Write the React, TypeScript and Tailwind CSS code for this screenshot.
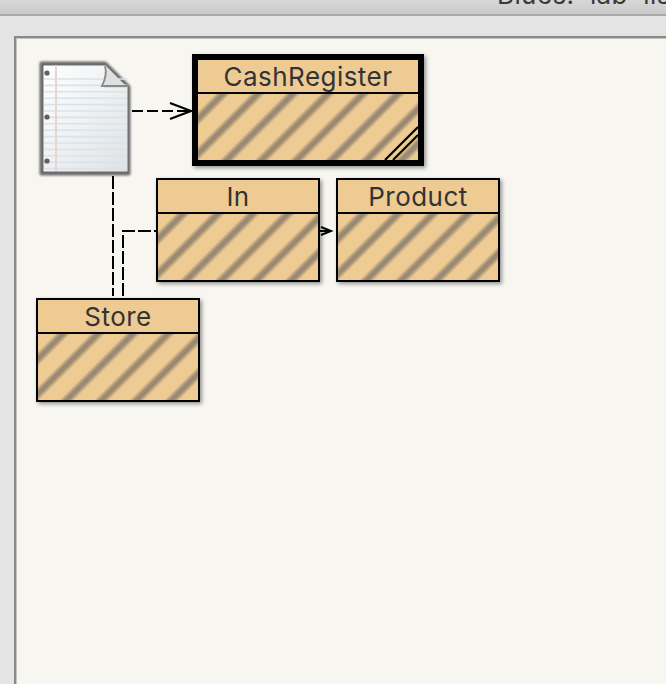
const FONT = "font-['Inter',sans-serif]";

// nodes sit on the diagram canvas, coordinates are relative to the panel's inner corner
function ClassBox({ name, x, y, selected }: { name: string; x: number; y: number; selected?: boolean }) {
  return (
    <div
      className={`absolute flex flex-col bg-[#eecb93] border-black shadow-[2px_2px_4px_rgba(0,0,0,0.4)] ${
        selected ? "w-[232px] h-[112px] border-[6px]" : "w-[164px] h-[104px] border-2"
      }`}
      style={{ left: x, top: y }}
    >
      <div className={`flex items-center justify-center h-[34px] pt-[1px] shrink-0 border-b-2 border-black text-[26px] tracking-[0.45px] leading-none text-[#333333] ${FONT}`}>
        {name}
      </div>
      <div className="relative flex-1 bg-[repeating-linear-gradient(135deg,#eecb93_0px,#eecb93_12px,#9b8a73_16px,#9b8a73_19px,#eecb93_23px,#eecb93_24.75px)]">
        {selected && (
          <svg className="absolute right-0 bottom-0" width="36" height="36" viewBox="0 0 36 36">
            <path d="M3 36L36 3M11 36L36 11" stroke="#000" strokeWidth="2.2" fill="none" />
          </svg>
        )}
      </div>
    </div>
  );
}

function DocIcon() {
  const lines = [];
  for (let y = 21; y < 114; y += 6.4) lines.push(y);
  return (
    <svg className="absolute left-[20px] top-[20px]" width="100" height="124" viewBox="0 0 100 124">
      <defs>
        <linearGradient id="sheet" x1="0" y1="0" x2="1" y2="1">
          <stop offset="0" stopColor="#ffffff" />
          <stop offset="1" stopColor="#dfe2e4" />
        </linearGradient>
        <filter id="soft" x="-10%" y="-10%" width="120%" height="120%">
          <feGaussianBlur stdDeviation="0.7" />
        </filter>
        <filter id="blur2" x="-10%" y="-10%" width="120%" height="120%">
          <feGaussianBlur stdDeviation="0.9" />
        </filter>
      </defs>
      <path d="M5.5 5.5H69L92.5 29V115.5H5.5Z" fill="#6c6c6c" stroke="#6c6c6c" strokeWidth="4" strokeLinejoin="round" filter="url(#blur2)" />
      <path d="M7.5 7.5H69L91.5 30V113.5H7.5Z" fill="url(#sheet)" filter="url(#soft)" />
      <g filter="url(#soft)">
        {lines.map((y) => (
          <path key={y} d={`M8 ${y}H91`} stroke="#d9e3eb" strokeWidth="1.6" />
        ))}
        <path d="M20 7V113" stroke="#e5d6cf" strokeWidth="2" />
        <circle cx="11" cy="15" r="2.6" fill="#5f5f5f" />
        <circle cx="11" cy="59" r="2.6" fill="#5f5f5f" />
        <circle cx="11" cy="103" r="2.6" fill="#5f5f5f" />
        <path d="M69 7L92 30H68Z" fill="#e0e0e0" />
        <path d="M69 8C71 15 69 22 66 28H92" stroke="#8a8a8a" strokeWidth="1.8" fill="none" />
      </g>
    </svg>
  );
}

function Arrows() {
  return (
    <svg className="absolute left-0 top-0" width="650" height="646" viewBox="16 38 650 646">
      <g stroke="#000" strokeWidth="2" fill="none">
        <path d="M132 111H192" strokeDasharray="11 4" />
        <path d="M170 103L191 111L170 119" strokeWidth="2.2" />
        <path d="M113 176V296" strokeDasharray="13 3" />
        <path d="M123 296V231H156" strokeDasharray="13 3" />
        <path d="M320 231H331" />
        <path d="M321 227L331 231L321 235" />
      </g>
    </svg>
  );
}

export default function App() {
  return (
    <div className="flex flex-col w-[666px] h-[684px] overflow-hidden bg-[#e4e4e4]">
      <div className={`relative h-[16px] shrink-0 border-b-2 border-[#a9a9a9] bg-gradient-to-b from-[#d8d8d8] to-[#c9c9c9] overflow-hidden ${FONT}`}>
        <span className="absolute left-[497px] top-[-17px] text-[26px] leading-[24px] tracking-[0.4px] whitespace-pre text-[#3a3a3a]">Blues:  lab  lists</span>
      </div>
      <div className="flex-1 pt-[20px] pl-[14px] min-h-0">
        <div className="relative w-[700px] h-[700px] border-t-[2px] border-l-[2px] border-[#8a8a8a] bg-[#f7f6f1] shadow-[inset_1px_1px_0_#c4c4c4]">
          <DocIcon />
          <Arrows />
          <ClassBox name="CashRegister" x={176} y={16} selected />
          <ClassBox name="In" x={140} y={140} />
          <ClassBox name="Product" x={320} y={140} />
          <ClassBox name="Store" x={20} y={260} />
        </div>
      </div>
    </div>
  );
}
